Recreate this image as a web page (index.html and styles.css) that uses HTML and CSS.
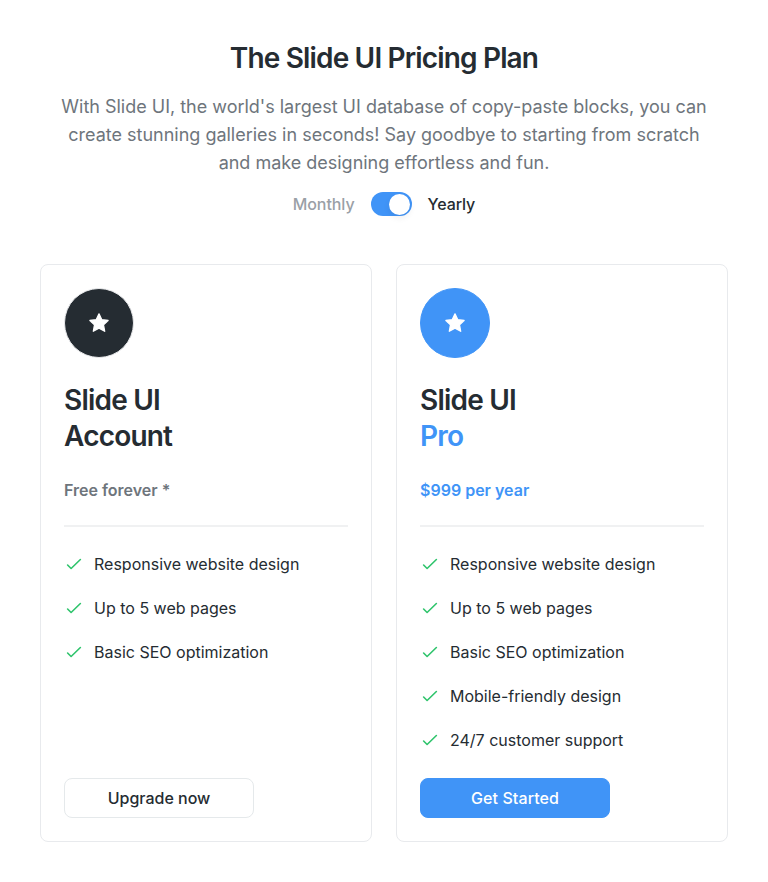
FILE: index.html
```html
<!DOCTYPE html>
<html lang="en">
<head>
<meta charset="utf-8">
<title>Pricing</title>
<link rel="stylesheet" href="styles.css">
</head>
<body>
<svg class="defs" width="0" height="0">
  <symbol id="star" viewBox="0 0 24 24"><path d="M12 2.9l2.8 5.8 6.3.8-4.6 4.4 1.2 6.4L12 17.2l-5.7 3.1 1.2-6.4-4.6-4.4 6.3-.8z" fill="#fff" stroke="#fff" stroke-width="1.3" stroke-linejoin="round"/></symbol>
  <symbol id="check" viewBox="0 0 20 20"><path d="M3.6 11l3.5 3.5L16.4 5.5" fill="none" stroke="#2fc46c" stroke-width="1.6" stroke-linecap="round" stroke-linejoin="round"/></symbol>
</svg>
<main class="page">
  <header class="intro">
    <h1 class="heading">The Slide UI Pricing Plan</h1>
    <p class="lead">With Slide UI, the world's largest UI database of copy-paste blocks, you can<br>create stunning galleries in seconds! Say goodbye to starting from scratch<br>and make designing effortless and fun.</p>
    <div class="billing"><span class="muted">Monthly</span><span class="switch"><span class="knob"></span></span><span>Yearly</span></div>
  </header>
  <div class="plans">
    <section class="card">
      <div class="badge"><svg width="24" height="24"><use href="#star"/></svg></div>
      <h2 class="name">Slide UI<br>Account</h2>
      <p class="price">Free forever *</p>
      <ul class="features">
        <li><svg width="20" height="20"><use href="#check"/></svg><span>Responsive website design</span></li>
        <li><svg width="20" height="20"><use href="#check"/></svg><span>Up to 5 web pages</span></li>
        <li><svg width="20" height="20"><use href="#check"/></svg><span>Basic SEO optimization</span></li>
      </ul>
      <button class="button">Upgrade now</button>
    </section>
    <section class="card pro">
      <div class="badge"><svg width="24" height="24"><use href="#star"/></svg></div>
      <h2 class="name">Slide UI<br><span class="accent">Pro</span></h2>
      <p class="price">$999 per year</p>
      <ul class="features">
        <li><svg width="20" height="20"><use href="#check"/></svg><span>Responsive website design</span></li>
        <li><svg width="20" height="20"><use href="#check"/></svg><span>Up to 5 web pages</span></li>
        <li><svg width="20" height="20"><use href="#check"/></svg><span>Basic SEO optimization</span></li>
        <li><svg width="20" height="20"><use href="#check"/></svg><span>Mobile-friendly design</span></li>
        <li><svg width="20" height="20"><use href="#check"/></svg><span>24/7 customer support</span></li>
      </ul>
      <button class="button">Get Started</button>
    </section>
  </div>
</main>
</body>
</html>
```
FILE: styles.css
```css
* { box-sizing: border-box; margin: 0; padding: 0; }
body { background: #fff; color: #252c32; font-family: Inter, sans-serif; }
.defs { display: block; }
.page { padding: 40px 40px; }
.intro { text-align: center; }
.heading { font-size: 28px; line-height: 36px; font-weight: 600; letter-spacing: -0.84px; }
.lead { margin: 17px -10px 0; font-size: 18px; line-height: 28px; letter-spacing: -0.01px; color: #6e757c; }
.billing { display: flex; justify-content: center; align-items: center; gap: 16px; margin-top: 15px; height: 24px; font-size: 16px; font-weight: 500; letter-spacing: -0.08px; }
.muted { color: #9aa0a6; }
.switch { display: flex; justify-content: flex-end; align-items: center; width: 41px; height: 24px; padding: 2px; border-radius: 12px; background: #4094f7; }
.knob { width: 21px; height: 21px; border-radius: 50%; background: #fff; box-shadow: 0 3px 6px rgba(37, 44, 50, 0.08); }
.plans { display: grid; grid-template-columns: 1fr 1fr; gap: 24px; margin-top: 48px; }
.card { display: flex; flex-direction: column; align-items: flex-start; height: 578px; padding: 23px; border: 1px solid #e8eaed; border-radius: 8px; }
.badge { display: flex; align-items: center; justify-content: center; width: 70px; height: 70px; border: 1px solid #e9eaec; border-radius: 50%; background: #252c32; }
.name { margin-top: 24px; font-size: 28px; line-height: 36px; font-weight: 600; letter-spacing: -0.8px; }
.price { align-self: stretch; margin-top: 24px; padding-bottom: 23px; border-bottom: 2px solid #f0f1f2; font-size: 16px; line-height: 24px; font-weight: 600; color: #6e757c; }
.features { display: flex; flex-direction: column; gap: 20px; margin-top: 25px; list-style: none; font-size: 16px; line-height: 24px; }
.features li { display: flex; align-items: center; gap: 10px; }
.button { width: 190px; height: 40px; margin-top: auto; border: 1px solid #e5e9eb; border-radius: 8px; background: #fff; color: #252c32; font: 500 16px/24px Inter, sans-serif; }
.pro .badge { border-color: #4094f7; background: #4094f7; }
.pro .price, .accent { color: #4094f7; }
.pro .button { border-color: #4094f7; background: #4094f7; color: #fff; letter-spacing: 0.1px; }
```
